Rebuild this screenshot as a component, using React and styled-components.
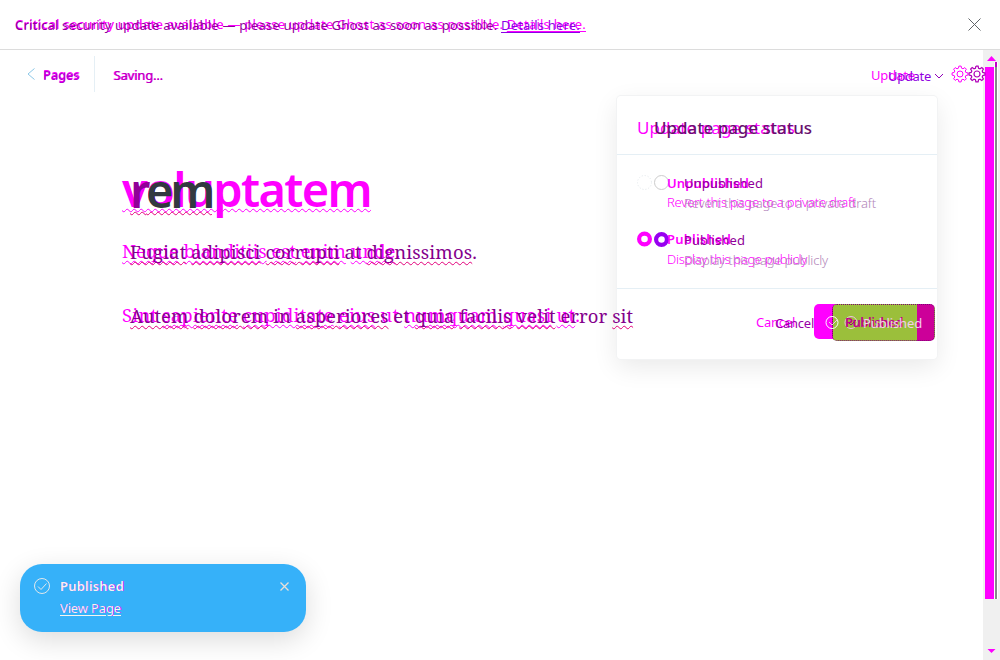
import React, { useLayoutEffect, useRef } from "react";
import styled, { createGlobalStyle } from "styled-components";

const Global = createGlobalStyle`
  * { box-sizing: border-box; }
  html, body { margin: 0; overflow: hidden; }
  body { font-family: "Noto Sans", "Open Sans", sans-serif; font-size: 13px; background: #fff; }
`;

const Screen = styled.div`
  position: relative;
  width: 1000px;
  height: 660px;
  display: flex;
  flex-direction: column;
  overflow: hidden;
`;

const Stack = styled.div`
  display: grid;
  justify-items: start;
  height: ${(p) => p.$h}px;
  > * { grid-area: 1 / 1; }
`;

const Line = styled.span`
  display: block;
  white-space: pre;
  width: max-content;
  margin-left: ${(p) => p.$x || 0}px;
  margin-top: ${(p) => p.$y || 0}px;
  line-height: ${(p) => p.$h || 18}px;
  height: ${(p) => p.$h || 18}px;
  font-size: ${(p) => p.$size || 13}px;
  font-weight: ${(p) => p.$weight || 400};
  font-family: ${(p) => (p.$serif ? '"Noto Serif", "DejaVu Serif Condensed", "DejaVu Serif", serif' : "inherit")};
  font-stretch: ${(p) => (p.$serif ? "condensed" : "normal")};
  color: ${(p) => p.$color || "#f0f"};
`;

/* Spreads the letters so that the line takes exactly `w` pixels. */
function Fit({ w, children, ...rest }) {
  const ref = useRef(null);
  useLayoutEffect(() => {
    const el = ref.current;
    el.style.letterSpacing = "0px";
    const n = el.textContent.length;
    el.style.letterSpacing = (w - el.getBoundingClientRect().width) / n + "px";
  }, [w]);
  return <Line ref={ref} {...rest}>{children}</Line>;
}

function Pair({ h = 18, before, after, a, b, ...rest }) {
  return (
    <Stack $h={h}>
      <Fit $h={h} {...rest} {...a}>{before}</Fit>
      <Fit $h={h} $color="#90009a" {...rest} {...b}>{after}</Fit>
    </Stack>
  );
}

const Strong = styled.span`font-weight: 500;`;
const Link = styled.span`
  color: ${(p) => p.$color || "inherit"};
  text-decoration: underline;
  text-underline-offset: 2px;
`;
const Spell = styled.span`
  text-decoration: underline wavy ${(p) => p.$color} 1px;
  text-decoration-skip-ink: none;
  text-underline-offset: ${(p) => p.$off || 0}px;
`;

const Banner = styled.header`
  height: 50px;
  flex: none;
  padding: 15px 19px 0 15px;
  border-bottom: 1px solid #dcdcdc;
  display: flex;
  justify-content: space-between;
`;
const Body = styled.div`
  flex: 1;
  display: flex;
`;
const Content = styled.main`
  width: 983px;
  position: relative;
`;
const Toolbar = styled.div`
  height: 50px;
  display: flex;
  align-items: center;
  padding-left: 26px;
`;
const Back = styled.div`
  display: flex;
  align-items: center;
  width: 69px;
  height: 36px;
  margin-top: -3px;
  border-right: 1px solid #e5eff5;
  svg { margin-right: 7px; }
`;
const Status = styled.div`
  margin-left: 18px;
  flex: 1;
`;
const Actions = styled.div`
  display: flex;
  align-items: center;
  width: 112px;
  overflow: visible;
  flex: none;
  > svg { flex: none; }
`;
const Article = styled.article`
  position: relative;
  z-index: 2;
  padding: 57px 0 0 122px;
`;
const Title = styled.h1`
  margin: 0 0 16px;
  font-weight: 700;
`;
const Para = styled.div`
  height: 64px;
`;
const Panel = styled.section`
  position: absolute;
  left: 617px;
  top: 46px;
  width: 320px;
  height: 263px;
  border-radius: 4px;
  background: #fff;
  box-shadow: 0 0 0 1px #f2f3f4, 0 8px 26px rgba(0, 0, 0, 0.09);
  z-index: 1;
`;
const PanelHead = styled.div`
  height: 59px;
  padding: 19px 20px;
  border-bottom: 1px solid #e5eff5;
`;
const Options = styled.div`
  height: 134px;
  padding: 18px 20px 0;
  border-bottom: 1px solid #e5eff5;
`;
const Option = styled.div`
  display: flex;
  height: 57px;
`;
const Radios = styled.svg`
  width: 34px;
  height: 18px;
  flex: none;
  margin-right: -4px;
`;
const Foot = styled.div`
  display: flex;
  padding: 15px 0 0 139px;
`;
const Buttons = styled.div`
  display: grid;
  width: 122px;
  > * { grid-area: 1 / 1; }
`;
const OldButton = styled.div`
  width: 103px;
  height: 35px;
  border-radius: 5px;
  background: #f0f;
`;
const NewButton = styled.div`
  margin-left: 18px;
  width: 103px;
  height: 37px;
  border-radius: 5px;
  border: 1px dotted #80007a;
  background: linear-gradient(90deg, #9bbf3b 84px, #cc0099 84px);
`;
const ButtonText = styled.div`
  display: flex;
  height: 36px;
  padding: 9px 0 0 11px;
  z-index: 1;
  svg { flex: none; margin-right: -13px; }
`;
const Scroll = styled.aside`
  width: 17px;
  background: #f0f0f0;
  display: flex;
  flex-direction: column;
  align-items: center;
`;
const Track = styled.div`
  display: flex;
  width: 17px;
  padding-left: 2px;
  height: 537px;
`;
const Thumb = styled.div`
  width: 9px;
  height: 532px;
  margin-top: 5px;
  background: #f0f;
`;
const Edge = styled.div`
  width: 4px;
  height: 537px;
  border-left: 1px solid #fff;
  border-right: 1px solid #fff;
  background: linear-gradient(#c000c8 5px, #85878a 5px);
`;
const Toast = styled.div`
  position: absolute;
  z-index: 3;
  left: 20px;
  top: 564px;
  width: 286px;
  height: 68px;
  border-radius: 22px;
  padding: 13px 17px 0 14px;
  background: #36b1f9;
  box-shadow: 0 8px 28px rgba(0, 0, 0, 0.14);
  display: flex;
  > svg { flex: none; }
`;
const ToastText = styled.div`
  flex: 1;
  margin-left: 10px;
  display: flex;
  flex-direction: column;
  gap: 4px;
`;
const CrossSvg = styled.svg`margin-top: ${(p) => p.$top}px;`;

function Cross({ size, color, top, weight = 1 }) {
  return (
    <CrossSvg $top={top} width={size} height={size} viewBox={`0 0 ${size} ${size}`}>
      <path d={`M.5 .5L${size - 0.5} ${size - 0.5}M${size - 0.5} .5L.5 ${size - 0.5}`} stroke={color} strokeWidth={weight} fill="none" />
    </CrossSvg>
  );
}

const gear = Array.from({ length: 33 }, (_, i) => {
  const k = i % 4;
  const r = k < 2 ? 8 : 6;
  const t = (Math.floor(i / 4) * 45 + [-8, 8, 15, 30][k]) * Math.PI / 180;
  return `${i ? "L" : "M"}${(Math.sin(t) * r).toFixed(2)} ${(-Math.cos(t) * r).toFixed(2)}`;
}).join("");

const GearSvg = styled.svg`margin-top: -2px;`;
const Chevron = styled.svg`margin: 2px 5px 0 4px;`;

function Gears() {
  return (
    <GearSvg width="36" height="18" viewBox="0 0 36 18" fill="none">
      <g transform="translate(9 9)" stroke="#f0f"><path d={gear} /><circle r="3" /></g>
      <g transform="translate(26 9)" stroke="#b000b8" strokeWidth="1.2"><path d={gear} /><circle r="3" /></g>
    </GearSvg>
  );
}

const M = ({ children }) => <Spell $color="#f0f" $off={2}>{children}</Spell>;
const P = ({ children }) => <Spell $color="#e2007a" $off={2}>{children}</Spell>;
const First = styled.span`color: #900098;`;

export default function App() {
  return (
    <Screen>
      <Global />
      <Banner>
        <Pair
          a={{ w: 571 }}
          b={{ w: 565, $y: 1 }}
          before={<><Strong>Critical security update available</Strong> — please update Ghost as soon as possible. <Link>Details here.</Link></>}
          after={<>Critical security update available — please update Ghost as soon as possible. <Link $color="#8c00e6">Details here.</Link></>}
        />
        <Cross size={13} color="#606468" top={3} />
      </Banner>
      <Body>
        <Content>
          <Toolbar>
            <Back>
              <svg width="10" height="14" fill="none" stroke="#8cc8e8"><path d="M8.5 1.5L2 7L8.5 12.5" /></svg>
              <Pair a={{ w: 37 }} b={{ w: 36, $y: 1, $color: "#b400d0" }} $weight={500} before="Pages" after="Pages" />
            </Back>
            <Status>
              <Pair a={{ w: 50 }} b={{ w: 49, $x: 1, $color: "#b400bc" }} before="Saving..." after="Saving..." />
            </Status>
            <Actions>
              <Pair a={{ w: 44 }} b={{ w: 43, $x: 17, $y: 1, $color: "#9000e0" }} before="Update" after="Update" />
              <Chevron width="11" height="8" viewBox="2 0 11 8" fill="none" stroke="#9000b8"><path d="M2 2L6 6L10 2" /></Chevron>
              <Gears />
            </Actions>
          </Toolbar>
          <Article>
            <Title>
              <Pair
                h={64}
                a={{ w: 249, $size: 47, $weight: 600 }}
                b={{ w: 82, $size: 47, $weight: 600, $x: 8, $y: 1, $color: "#333a40" }}
                before={<Spell $color="#f0f" $off={1}>voluptatem</Spell>}
                after={<Spell $color="#e2007a" $off={3}><First>r</First>em</Spell>}
              />
            </Title>
            <Para>
              <Pair
                h={30} $serif $size={18.5}
                a={{ w: 278, $y: -1 }}
                b={{ w: 347, $x: 8, $color: "#84008c" }}
                before={<><M>Neque</M> <M>blanditiis</M> <M>est</M> <M>enim</M> <M>unde</M>.</>}
                after={<><P>Fugiat</P> <P>adipisci</P> <P>corrupti</P> at <P>dignissimos</P>.</>}
              />
            </Para>
            <Pair
              h={30} $serif $size={18.5}
              a={{ w: 458, $y: -1 }}
              b={{ w: 503, $x: 8, $color: "#84008c" }}
              before={<>Sint <M>sapiente</M> <M>cupiditate</M> <M>eius</M> ut <M>numquam</M> <M>quasi</M> <M>ut</M>.</>}
              after={<><P>Autem</P> <P>dolorem</P> in <P>asperiores</P> et <P>quia</P> <P>facilis</P> <P>velit</P> error <P>sit</P></>}
            />
          </Article>
          <Panel>
            <PanelHead>
              <Pair h={26} $size={17} a={{ w: 158 }} b={{ w: 158, $x: 17, $weight: 500, $color: "#68106e" }} before="Update page status" after="Update page status" />
            </PanelHead>
            <Options>
              <Option>
                <Radios fill="none">
                  <circle cx="7.5" cy="9.5" r="7" stroke="#e1e7eb" strokeDasharray="1 2" />
                  <circle cx="24.5" cy="9.5" r="7" stroke="#ccc" />
                </Radios>
                <div>
                  <Pair h={20} a={{ w: 82, $weight: 600 }} b={{ w: 79, $x: 17 }} before="Unpublished" after="Unpublished" />
                  <Pair h={20} a={{ w: 189, $weight: 300, $y: -1 }} b={{ w: 192, $x: 17, $weight: 300, $color: "#b286b9" }} before="Revert this page to a private draft" after="Revert this page to a private draft" />
                </div>
              </Option>
              <Option>
                <Radios fill="none">
                  <circle cx="7.5" cy="9" r="5.4" stroke="#f0f" strokeWidth="4.2" />
                  <circle cx="24.5" cy="9.5" r="5.4" stroke="#9800f0" strokeWidth="4.2" />
                </Radios>
                <div>
                  <Pair h={20} a={{ w: 64, $weight: 600, $y: -1 }} b={{ w: 61, $x: 17 }} before="Published" after="Published" />
                  <Pair h={20} a={{ w: 140, $weight: 300, $y: -1 }} b={{ w: 144, $x: 17, $weight: 300, $color: "#b286b9" }} before="Display this page publicly" after="Display this page publicly" />
                </div>
              </Option>
            </Options>
            <Foot>
              <Stack $h={36}>
                <Fit w={39} $h={36}>Cancel</Fit>
                <Fit w={39} $h={36} $x={19} $y={1} $color="#9800a8">Cancel</Fit>
              </Stack>
              <Buttons>
                <OldButton />
                <NewButton />
                <ButtonText>
                  <svg width="33" height="18" fill="none">
                    <circle cx="7" cy="9.5" r="6" stroke="#fff" /><path d="M4 9l3 3 5-5" stroke="#ead0e4" />
                    <circle cx="26" cy="9.5" r="6" stroke="#ecc4df" /><path d="M23 9l3 3 5-5" stroke="#9b0080" />
                  </svg>
                  <Pair a={{ w: 58, $weight: 600, $color: "#c0008c" }} b={{ w: 59, $x: 18, $y: 1, $color: "#f4cdea" }} before="Published" after="Published" />
                </ButtonText>
              </Buttons>
            </Foot>
          </Panel>
        </Content>
        <Scroll>
          <svg width="17" height="12"><path d="M4 11L8.5 6L13 11Z" fill="#f0f" /></svg>
          <Track><Thumb /><Edge /></Track>
          <svg width="17" height="61"><path d="M4.5 50L8.5 54L12.5 50Z" fill="#f0f" /></svg>
        </Scroll>
      </Body>
      <Toast>
        <svg width="16" height="18" viewBox="0 0 16 18" fill="none" stroke="#e1e8ec" strokeWidth="1"><circle cx="8" cy="9" r="7.5" /><path d="M4 9.5l3 3 5.5-6" /></svg>
        <ToastText>
          <Pair $weight={600} a={{ w: 65, $color: "#a000ff" }} b={{ w: 64, $color: "#f5f5f0" }} before="Published" after="Published" />
          <Pair a={{ w: 62, $color: "#a000ff" }} b={{ w: 61, $color: "#f5f5f0" }} before="View Page" after={<Link>View Page</Link>} />
        </ToastText>
        <Cross size={9} color="#e8e0d8" top={5} weight={1.3} />
      </Toast>
    </Screen>
  );
}
